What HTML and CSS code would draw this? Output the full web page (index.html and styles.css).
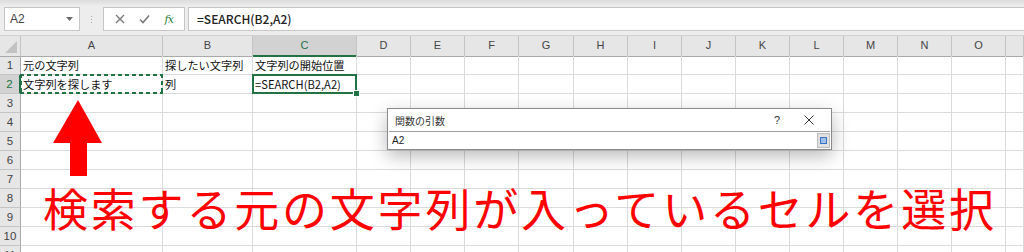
FILE: index.html
```html
<!DOCTYPE html>
<html lang="ja">

<head>
    <meta charset="UTF-8">
    <title>SEARCH関数</title>
    <link rel="stylesheet" href="styles.css">
</head>

<body>
    <!-- 数式バー -->
    <div class="formula-bar">
        <div class="name-box">
            <span>A2</span>
            <svg class="caret" width="7" height="4" viewBox="0 0 7 4"><path d="M0 0H7L3.5 4Z" fill="#6a6a6a"/></svg>
        </div>
        <div class="grip"><i></i><i></i><i></i></div>
        <div class="fx-buttons">
            <svg width="10" height="10" viewBox="0 0 10 10"><path d="M1 1L9 9M9 1L1 9" stroke="#7a7a7a" stroke-width="1.4"/></svg>
            <svg width="11" height="10" viewBox="0 0 11 10"><path d="M1 5.5L4 8.5L10 1.5" stroke="#7a7a7a" stroke-width="1.6" fill="none"/></svg>
            <span class="fx">fx</span>
        </div>
        <div class="formula-input">=SEARCH(B2,A2)</div>
    </div>

    <!-- シート -->
    <div class="sheet">
        <div class="row head">
            <div class="corner"></div>
            <div class="col">A</div><div class="col">B</div><div class="col selected">C</div><div class="col">D</div>
            <div class="col">E</div><div class="col">F</div><div class="col">G</div><div class="col">H</div>
            <div class="col">I</div><div class="col">J</div><div class="col">K</div><div class="col">L</div>
            <div class="col">M</div><div class="col">N</div><div class="col">O</div><div class="col"></div>
        </div>
        <div class="row">
            <div class="rh">1</div>
            <div class="cell">元の文字列</div><div class="cell">探したい文字列</div><div class="cell">文字列の開始位置</div>
            <div class="cell"></div><div class="cell"></div><div class="cell"></div><div class="cell"></div><div class="cell"></div><div class="cell"></div><div class="cell"></div><div class="cell"></div><div class="cell"></div><div class="cell"></div><div class="cell"></div><div class="cell"></div><div class="cell"></div>
        </div>
        <div class="row">
            <div class="rh selected">2</div>
            <div class="cell marquee">文字列を探します</div><div class="cell">列</div><div class="cell active">=SEARCH(B2,A2)</div>
            <div class="cell"></div><div class="cell"></div><div class="cell"></div><div class="cell"></div><div class="cell"></div><div class="cell"></div><div class="cell"></div><div class="cell"></div><div class="cell"></div><div class="cell"></div><div class="cell"></div><div class="cell"></div><div class="cell"></div>
        </div>
        <div class="row"><div class="rh">3</div><div class="cell"></div><div class="cell"></div><div class="cell"></div><div class="cell"></div><div class="cell"></div><div class="cell"></div><div class="cell"></div><div class="cell"></div><div class="cell"></div><div class="cell"></div><div class="cell"></div><div class="cell"></div><div class="cell"></div><div class="cell"></div><div class="cell"></div><div class="cell"></div></div>
        <div class="row"><div class="rh">4</div><div class="cell"></div><div class="cell"></div><div class="cell"></div><div class="cell"></div><div class="cell"></div><div class="cell"></div><div class="cell"></div><div class="cell"></div><div class="cell"></div><div class="cell"></div><div class="cell"></div><div class="cell"></div><div class="cell"></div><div class="cell"></div><div class="cell"></div><div class="cell"></div></div>
        <div class="row"><div class="rh">5</div><div class="cell"></div><div class="cell"></div><div class="cell"></div><div class="cell"></div><div class="cell"></div><div class="cell"></div><div class="cell"></div><div class="cell"></div><div class="cell"></div><div class="cell"></div><div class="cell"></div><div class="cell"></div><div class="cell"></div><div class="cell"></div><div class="cell"></div><div class="cell"></div></div>
        <div class="row"><div class="rh">6</div><div class="cell"></div><div class="cell"></div><div class="cell"></div><div class="cell"></div><div class="cell"></div><div class="cell"></div><div class="cell"></div><div class="cell"></div><div class="cell"></div><div class="cell"></div><div class="cell"></div><div class="cell"></div><div class="cell"></div><div class="cell"></div><div class="cell"></div><div class="cell"></div></div>
        <div class="row"><div class="rh">7</div><div class="cell"></div><div class="cell"></div><div class="cell"></div><div class="cell"></div><div class="cell"></div><div class="cell"></div><div class="cell"></div><div class="cell"></div><div class="cell"></div><div class="cell"></div><div class="cell"></div><div class="cell"></div><div class="cell"></div><div class="cell"></div><div class="cell"></div><div class="cell"></div></div>
        <div class="row"><div class="rh">8</div><div class="cell"></div><div class="cell"></div><div class="cell"></div><div class="cell"></div><div class="cell"></div><div class="cell"></div><div class="cell"></div><div class="cell"></div><div class="cell"></div><div class="cell"></div><div class="cell"></div><div class="cell"></div><div class="cell"></div><div class="cell"></div><div class="cell"></div><div class="cell"></div></div>
        <div class="row"><div class="rh">9</div><div class="cell"></div><div class="cell"></div><div class="cell"></div><div class="cell"></div><div class="cell"></div><div class="cell"></div><div class="cell"></div><div class="cell"></div><div class="cell"></div><div class="cell"></div><div class="cell"></div><div class="cell"></div><div class="cell"></div><div class="cell"></div><div class="cell"></div><div class="cell"></div></div>
        <div class="row"><div class="rh">10</div><div class="cell"></div><div class="cell"></div><div class="cell"></div><div class="cell"></div><div class="cell"></div><div class="cell"></div><div class="cell"></div><div class="cell"></div><div class="cell"></div><div class="cell"></div><div class="cell"></div><div class="cell"></div><div class="cell"></div><div class="cell"></div><div class="cell"></div><div class="cell"></div></div>
        <div class="row"><div class="rh">11</div><div class="cell"></div><div class="cell"></div><div class="cell"></div><div class="cell"></div><div class="cell"></div><div class="cell"></div><div class="cell"></div><div class="cell"></div><div class="cell"></div><div class="cell"></div><div class="cell"></div><div class="cell"></div><div class="cell"></div><div class="cell"></div><div class="cell"></div><div class="cell"></div></div>
    </div>

    <!-- 関数の引数ダイアログ -->
    <div class="dialog">
        <div class="dialog-title">
            <span>関数の引数</span>
            <span class="help">?</span>
            <svg class="close" width="10" height="10" viewBox="0 0 10 10"><path d="M0.5 0.5L9.5 9.5M9.5 0.5L0.5 9.5" stroke="#333" stroke-width="1"/></svg>
        </div>
        <div class="dialog-input">
            <span>A2</span>
            <span class="collapse-btn"><i></i></span>
        </div>
    </div>

    <!-- 注釈 -->
    <svg class="arrow" width="49" height="76" viewBox="0 0 49 76">
        <path d="M25 0L49 43H34V76H17V43H0Z" fill="#ff0000"/>
    </svg>
    <p class="caption">検索する元の文字列が入っているセルを選択</p>
</body>

</html>
```

FILE: styles.css
```css
body {
    margin: 0;
    width: 1024px;
    height: 252px;
    overflow: hidden;
    position: relative;
    background-color: #ffffff;
    font-family: "Noto Sans CJK JP", "Noto Sans", sans-serif;
    color: #222222;
}

/* 数式バー */
.formula-bar {
    height: 36px;
    box-sizing: border-box;
    padding-top: 7px;
    display: flex;
    align-items: flex-start;
    background: linear-gradient(#dcdcdc, #ededed 6px);
    border-bottom: 1px solid #d0d0d0;
}

.name-box {
    margin-left: 4px;
    width: 76px;
    height: 24px;
    box-sizing: border-box;
    display: flex;
    align-items: center;
    justify-content: space-between;
    padding: 0 6px 0 5px;
    background-color: #ffffff;
    border: 1px solid #c6c6c6;
    font-family: "Liberation Sans", sans-serif;
    font-size: 12px;
    color: #444444;
}

.grip {
    width: 23px;
    height: 24px;
    display: flex;
    flex-direction: column;
    align-items: center;
    justify-content: center;
    gap: 2px;
}

.grip i {
    width: 1px;
    height: 1px;
    background-color: #a8a8a8;
}

.fx-buttons {
    width: 82px;
    height: 24px;
    box-sizing: border-box;
    display: flex;
    align-items: center;
    justify-content: space-around;
    padding: 0 4px;
    background-color: #ffffff;
    border: 1px solid #c6c6c6;
}

.fx {
    font-family: "DejaVu Serif", serif;
    font-style: italic;
    font-size: 11px;
    color: #2f7d3e;
    letter-spacing: -1px;
}

.formula-input {
    flex: 1;
    margin-left: 3px;
    height: 24px;
    box-sizing: border-box;
    padding-left: 8px;
    line-height: 22px;
    background-color: #ffffff;
    border: 1px solid #c6c6c6;
    border-right: none;
    font-size: 12px;
    font-weight: 500;
}

/* シート */
.row {
    display: grid;
    grid-template-columns: 21px 142px 90px 104px repeat(3, 54px) 55px repeat(8, 54px) 1fr;
    height: 19px;
}

.row.head {
    height: 20px;
    background-color: #e6e6e6;
}

.row > div {
    box-sizing: border-box;
    border-right: 1px solid #dadada;
    border-bottom: 1px solid #dadada;
}

.row.head > div {
    border-right-color: #c4c4c4;
    border-bottom-color: #a9a9a9;
    text-align: center;
    font-family: "Liberation Sans", sans-serif;
    font-size: 11px;
    line-height: 19px;
    color: #444444;
}

.corner {
    position: relative;
}

.corner::after {
    content: "";
    position: absolute;
    right: 3px;
    bottom: 3px;
    border-left: 12px solid transparent;
    border-bottom: 12px solid #c2c2c2;
}

.row.head .col.selected {
    background-color: #d2d2d2;
    color: #217346;
    border-bottom: 2px solid #217346;
}

.rh {
    background-color: #e6e6e6;
    text-align: center;
    font-family: "Liberation Sans", sans-serif;
    font-size: 11.5px;
    line-height: 18px;
    color: #444444;
}

.row > .rh {
    border-right-color: #a9a9a9;
    border-bottom-color: #c4c4c4;
}

.row > .rh.selected {
    background-color: #d2d2d2;
    color: #217346;
    border-right: 2px solid #217346;
}

.cell {
    padding-left: 2px;
    font-size: 11.2px;
    line-height: 18px;
    white-space: nowrap;
    color: #111111;
    position: relative;
}

/* コピー範囲の点線 */
.cell.marquee::after {
    content: "";
    position: absolute;
    left: -1px;
    top: -1px;
    right: -1px;
    bottom: -1px;
    background:
        repeating-linear-gradient(90deg, #217346 0 4px, transparent 4px 7px) top left / 100% 2px no-repeat,
        repeating-linear-gradient(90deg, #217346 0 4px, transparent 4px 7px) bottom left / 100% 2px no-repeat,
        repeating-linear-gradient(180deg, #217346 0 4px, transparent 4px 7px) top left / 2px 100% no-repeat,
        repeating-linear-gradient(180deg, #217346 0 4px, transparent 4px 7px) top right / 2px 100% no-repeat;
}

/* アクティブセル */
.cell.active::after {
    content: "";
    position: absolute;
    left: -1px;
    top: -1px;
    right: -1px;
    bottom: -1px;
    border: 2px solid #217346;
}

.cell.active::before {
    content: "";
    position: absolute;
    right: -4px;
    bottom: -4px;
    width: 5px;
    height: 5px;
    background-color: #217346;
    border: 1px solid #ffffff;
    z-index: 1;
}

/* 関数の引数ダイアログ */
.dialog {
    position: absolute;
    left: 387px;
    top: 108px;
    width: 445px;
    box-sizing: border-box;
    background-color: #ffffff;
    border: 1px solid #8a8a8a;
    box-shadow: 0 6px 18px rgba(0, 0, 0, 0.28);
    font-size: 10px;
    color: #333333;
}

.dialog-title {
    height: 22px;
    display: flex;
    align-items: center;
    padding: 0 17px 0 7px;
}

.dialog-title span:first-child {
    flex: 1;
}

.help {
    font-family: "Liberation Sans", sans-serif;
    font-size: 11px;
    margin-right: 24px;
}

.dialog-input {
    height: 17px;
    margin: 0 1px 1px 1px;
    box-sizing: border-box;
    display: flex;
    align-items: center;
    justify-content: space-between;
    padding-left: 3px;
    border-top: 1px solid #a0a0a0;
    font-family: "Liberation Sans", sans-serif;
    font-size: 10px;
    color: #222222;
}

.collapse-btn {
    width: 13px;
    height: 15px;
    box-sizing: border-box;
    display: flex;
    align-items: center;
    justify-content: center;
    background-color: #e1e1e1;
    border: 1px solid #bcbcbc;
}

.collapse-btn i {
    width: 5px;
    height: 5px;
    border: 1px solid #3a73c4;
    background-color: #9fc0ea;
}

/* 注釈 */
.arrow {
    position: absolute;
    left: 53px;
    top: 100px;
}

.caption {
    position: absolute;
    left: 43px;
    top: 182px;
    margin: 0;
    font-size: 45px;
    line-height: 52px;
    letter-spacing: 2.8px;
    color: #ff0000;
    white-space: nowrap;
}
```
